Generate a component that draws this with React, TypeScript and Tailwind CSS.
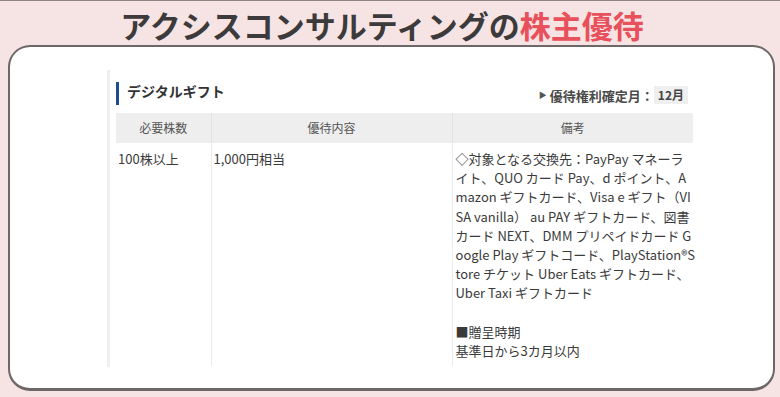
import React from "react";

const remarkLines = [
  "◇対象となる交換先：PayPay マネーラ",
  "イト、QUO カード Pay、d ポイント、A",
  "mazon ギフトカード、Visa e ギフト（VI",
  "SA vanilla） au PAY ギフトカード、図書",
  "カード NEXT、DMM プリペイドカード G",
  "oogle Play ギフトコード、PlayStation®S",
  "tore チケット Uber Eats ギフトカード、",
  "Uber Taxi ギフトカード",
  "",
  "■贈呈時期",
  "基準日から3カ月以内",
];

const font = { fontFamily: '"Noto Sans CJK JP", "Noto Sans", sans-serif' };

export default function App() {
  return (
    <div
      className="w-[780px] h-[397px] bg-[#f6e4e4] border-t border-[#8f8585] flex flex-col overflow-hidden"
      style={font}
    >
      {/* Title */}
      <h1 className="h-[44px] shrink-0 flex items-center justify-center pr-[16px] pt-[2px] text-[31px] leading-none font-bold text-[#3c3a3a]">
        アクシスコンサルティングの
        <span className="text-[#e8505b]">株主優待</span>
      </h1>

      {/* Card */}
      <div className="ml-[8px] mr-[5px] h-[346px] bg-white rounded-[22px] border-2 border-b-[3px] border-[#6e6767]">
        <div className="ml-[97px] mt-[23px] w-[590px] h-[297px] border-l-[3px] border-[#efefef] pl-[6px] pt-[12px]">
          {/* Section heading */}
          <div className="flex items-end justify-between w-[577px] h-[23px]">
            <div className="flex items-stretch h-[23px]">
              <div className="w-[3px] bg-[#1f4c8c]" />
              <span className="ml-[8px] text-[14px] leading-[18px] font-bold text-[#333]">
                デジタルギフト
              </span>
            </div>
            <div className="flex items-center mr-[5px]">
              <span className="text-[8px] text-[#555] mr-[3px]">▶</span>
              <span className="text-[13px] font-bold text-[#4a4a4a]">
                優待権利確定月：
              </span>
              <span className="h-[18px] px-[4px] bg-[#efefef] text-[12px] leading-[18px] font-bold text-[#444]">
                12月
              </span>
            </div>
          </div>

          {/* Table */}
          <table className="mt-[8px] w-[577px] table-fixed border-collapse text-[13px] text-[#3a3a3a]">
            <colgroup>
              <col className="w-[95px]" />
              <col className="w-[241px]" />
              <col className="w-[241px]" />
            </colgroup>
            <thead>
              <tr className="h-[30px] bg-[#eeeeee] text-[12px] text-[#555]">
                <th className="font-normal text-center">必要株数</th>
                <th className="font-normal text-center border-l border-[#e2e2e2]">優待内容</th>
                <th className="font-normal text-center border-l border-[#e2e2e2]">備考</th>
              </tr>
            </thead>
            <tbody>
              <tr className="align-top">
                <td className="pl-[2px] pt-[6px] leading-[19.2px]">100株以上</td>
                <td className="pl-[2px] pt-[6px] leading-[19.2px] border-l border-[#ebebeb]">
                  1,000円相当
                </td>
                <td className="pl-[3px] pt-[6px] pb-[6px] leading-[19.2px] border-l border-[#ebebeb]">
                  {remarkLines.map((line, i) => (
                    <div key={i} className="h-[19.2px] whitespace-nowrap">
                      {line}
                    </div>
                  ))}
                </td>
              </tr>
            </tbody>
          </table>
        </div>
      </div>
    </div>
  );
}
